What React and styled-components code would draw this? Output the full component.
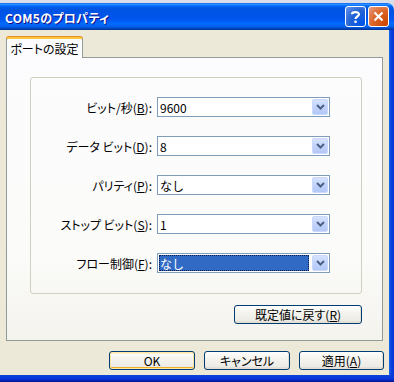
import React from "react";
import styled, { createGlobalStyle } from "styled-components";

const Global = createGlobalStyle`
  html, body { margin: 0; padding: 0; background: #ECE9D8; }
  body { font-family: "Noto Sans CJK JP", "Noto Sans", sans-serif; font-size: 12px; color: #000; }
  * { box-sizing: border-box; }
`;

const Window = styled.div`
  width: 394px;
  height: 382px;
  overflow: hidden;
  display: flex;
  flex-direction: column;
  background: #D6DCE8;
`;

const TopStrip = styled.div`
  height: 3px;
  flex: none;
  background: #D9DEE8;
`;

const TitleBar = styled.div`
  height: 27px;
  flex: none;
  display: flex;
  align-items: center;
  padding: 0 5px 0 5px;
  border-top-right-radius: 7px;
  background: linear-gradient(180deg, #0058EE 0%, #3593FF 4%, #288EFF 6%, #127DFF 8%, #036FFC 10%, #0262EE 14%, #0057E5 20%, #0054E3 24%, #0055EB 56%, #005BF5 66%, #026AFE 76%, #0062EF 86%, #0052D6 92%, #0040AB 96%, #003092 100%);
`;

const Title = styled.div`
  flex: 1;
  color: #fff;
  font-weight: 700;
  font-size: 12px;
  letter-spacing: 0.3px;
  text-shadow: 1px 1px #0F1089;
  font-feature-settings: "palt";
  padding-top: 1px;
`;

const CaptionButton = styled.div`
  width: 21px;
  height: 21px;
  margin-left: 2px;
  border: 1px solid #fff;
  border-radius: 3px;
  display: flex;
  align-items: center;
  justify-content: center;
  background: ${(p) =>
    p.$close
      ? "radial-gradient(circle at 90% 90%, #CC4600 0%, #DC6527 55%, #E5A08A 100%)"
      : "radial-gradient(circle at 90% 90%, #0054E9 0%, #2263D5 55%, #6696EB 100%)"};
`;

const Middle = styled.div`
  flex: 1;
  display: flex;
  min-height: 0;
`;

const Content = styled.div`
  flex: 1;
  background: #ECE9D8;
  padding: 7px 0 5px 6px;
  display: flex;
  flex-direction: column;
`;

const RightFrame = styled.div`
  width: 5px;
  flex: none;
  background: linear-gradient(90deg, #166AEE 0%, #0B45DA 40%, #0831D9 100%);
`;

const BottomFrame = styled.div`
  height: 7px;
  flex: none;
  background: linear-gradient(180deg, #0B45DA 0%, #0831D9 60%, #00138C 100%);
`;

const TabRow = styled.div`
  display: flex;
  position: relative;
  z-index: 1;
  margin-bottom: -1px;
`;

const Tab = styled.div`
  width: 77px;
  height: 21px;
  background: #FCFCFE;
  border: 1px solid #919B9C;
  border-bottom: none;
  border-top: 2px solid #FFC83C;
  box-shadow: 0 -1px 0 #E68B2C;
  border-radius: 3px 3px 0 0;
  display: flex;
  align-items: center;
  justify-content: center;
  font-size: 12px;
  font-feature-settings: "palt";
  padding-bottom: 1px;
`;

const Panel = styled.div`
  width: 377px;
  height: 284px;
  flex: none;
  border: 1px solid #919B9C;
  border-left-color: #919B9C;
  background: linear-gradient(180deg, #FCFCFE 0%, #FBFBF9 70%, #F4F3EE 100%);
  padding: 19px 0 16px 23px;
  display: flex;
  flex-direction: column;
  align-items: flex-start;
`;

const GroupBox = styled.div`
  width: 332px;
  height: 217px;
  flex: none;
  border: 1px solid #D0D0BF;
  border-radius: 3px;
  padding: 19px 0 20px 0;
  display: grid;
  grid-template-columns: 121px 173px;
  grid-auto-rows: 20px;
  column-gap: 5px;
  row-gap: 19px;
`;

const Label = styled.div`
  display: flex;
  align-items: center;
  justify-content: flex-end;
  white-space: nowrap;
  font-size: 12px;
  font-feature-settings: "palt";
`;

const U = styled.span`
  text-decoration: underline;
  text-underline-offset: 1px;
`;

const Combo = styled.div`
  display: flex;
  align-items: stretch;
  border: 1px solid #7F9DB9;
  background: #fff;
  padding: 1px;
`;

const ComboValue = styled.div`
  flex: 1;
  display: flex;
  align-items: center;
  padding-left: ${(p) => (p.$selected ? "1px" : "1px")};
  margin-right: ${(p) => (p.$selected ? "3px" : "0")};
  background: ${(p) => (p.$selected ? "#316AC5" : "transparent")};
  color: ${(p) => (p.$selected ? "#fff" : "#000")};
  outline: ${(p) => (p.$selected ? "1px dotted #0A1A40" : "none")};
  outline-offset: -1px;
  font-size: 12px;
`;

const DropButton = styled.div`
  width: 16px;
  flex: none;
  border: 1px solid #C9D8FC;
  border-radius: 2px;
  background: linear-gradient(180deg, #D7E3FD 0%, #C1D3FB 50%, #B4C8F6 100%);
  display: flex;
  align-items: center;
  justify-content: center;
`;

const ButtonRowInner = styled.div`
  display: flex;
  justify-content: flex-end;
  width: 332px;
  margin-top: 11px;
`;

const Button = styled.div`
  width: ${(p) => p.$w || 86}px;
  height: 19px;
  border: 1px solid #003C74;
  border-radius: 3px;
  background: linear-gradient(180deg, #FFFFFF 0%, #F4F3EE 40%, #ECEBE6 85%, #D6D0C5 100%);
  box-shadow: ${(p) =>
    p.$default
      ? "inset 0 0 0 1px #FFE7A2, inset 0 -2px 0 0 #F0AD2E, inset 0 2px 0 0 #FFF0CF"
      : "inset -1px -1px 0 #E3E0D2"};
  display: flex;
  align-items: center;
  justify-content: center;
  font-size: 12px;
  font-feature-settings: "palt";
`;

const Footer = styled.div`
  display: flex;
  justify-content: flex-end;
  gap: 9px;
  margin-top: 10px;
  padding-right: 5px;
`;

const Chevron = () => (
  <svg width="9" height="6" viewBox="0 0 9 6">
    <path d="M1 1 L4.5 4.5 L8 1" fill="none" stroke="#4D6185" strokeWidth="2" />
  </svg>
);

const rows = [
  { pre: "ビット/秒(", key: "B", post: "):", value: "9600" },
  { pre: "データ ビット(", key: "D", post: "):", value: "8" },
  { pre: "パリティ(", key: "P", post: "):", value: "なし" },
  { pre: "ストップ ビット(", key: "S", post: "):", value: "1" },
  { pre: "フロー制御(", key: "F", post: "):", value: "なし", selected: true },
];

export default function App() {
  return (
    <>
      <Global />
      <Window>
        <TopStrip />
        <TitleBar>
          <Title>COM5のプロパティ</Title>
          <CaptionButton>
            <svg width="11" height="14" viewBox="0 0 11 14">
              <path d="M2 4.2 C2 1.5 9 1.2 9 4.3 C9 6.5 5.5 6.5 5.5 9" fill="none" stroke="#fff" strokeWidth="2.2" />
              <rect x="4.4" y="10.6" width="2.3" height="2.3" fill="#fff" />
            </svg>
          </CaptionButton>
          <CaptionButton $close>
            <svg width="11" height="11" viewBox="0 0 11 11">
              <path d="M1.5 1.5 L9.5 9.5 M9.5 1.5 L1.5 9.5" stroke="#fff" strokeWidth="2.2" />
            </svg>
          </CaptionButton>
        </TitleBar>
        <Middle>
          <Content>
            <TabRow>
              <Tab>ポートの設定</Tab>
            </TabRow>
            <Panel>
              <GroupBox>
                {rows.map((r) => (
                  <React.Fragment key={r.key}>
                    <Label>
                      {r.pre}
                      <U>{r.key}</U>
                      {r.post}
                    </Label>
                    <Combo>
                      <ComboValue $selected={r.selected}>{r.value}</ComboValue>
                      <DropButton>
                        <Chevron />
                      </DropButton>
                    </Combo>
                  </React.Fragment>
                ))}
              </GroupBox>
              <ButtonRowInner>
                <Button $w={128}>
                  既定値に戻す(<U>R</U>)
                </Button>
              </ButtonRowInner>
            </Panel>
            <Footer>
              <Button $default>OK</Button>
              <Button>キャンセル</Button>
              <Button $w={85}>
                適用(<U>A</U>)
              </Button>
            </Footer>
          </Content>
          <RightFrame />
        </Middle>
        <BottomFrame />
      </Window>
    </>
  );
}
